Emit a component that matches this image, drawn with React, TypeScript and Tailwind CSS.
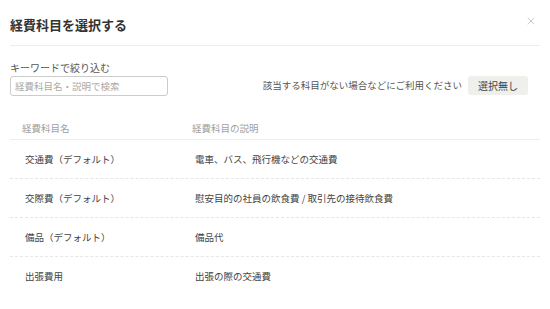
import { X } from "lucide-react";

interface ExpenseItem {
  name: string;
  description: string;
}

const items: ExpenseItem[] = [
  { name: "交通費（デフォルト）", description: "電車、バス、飛行機などの交通費" },
  { name: "交際費（デフォルト）", description: "慰安目的の社員の飲食費 / 取引先の接待飲食費" },
  { name: "備品（デフォルト）", description: "備品代" },
  { name: "出張費用", description: "出張の際の交通費" },
];

export default function App() {
  return (
    <div className="w-[550px] h-[309px] overflow-hidden bg-white px-[10px] font-['Noto_Sans_CJK_JP','Noto_Sans',sans-serif] text-[#333]">
      {/* ヘッダー */}
      <div className="flex justify-between items-start h-[46px] border-b border-[#eeeeee]">
        <h2 className="pt-[16px] leading-[18px] text-[13px] font-bold text-[#333]">
          経費科目を選択する
        </h2>
        <button className="mt-[15px] mr-[3px] text-[#b8b8b8]">
          <X size={12} strokeWidth={1.5} />
        </button>
      </div>

      {/* 絞り込み */}
      <div className="flex justify-between items-end mt-[16px]">
        <div>
          <label className="block text-[10px] leading-[12px] text-[#555] mb-[2px]">
            キーワードで絞り込む
          </label>
          <input
            className="block w-[158px] h-[20px] border border-[#cccccc] rounded-[3px] px-[4px] text-[9.5px] outline-none placeholder:text-[#aaaaaa]"
            placeholder="経費科目名・説明で検索"
          />
        </div>
        <div className="flex items-center gap-[6px] mr-[12px] mb-[1px]">
          <span className="text-[9.5px] text-[#555]">
            該当する科目がない場合などにご利用ください
          </span>
          <button className="w-[60px] h-[19px] rounded-[3px] bg-[#efefec] text-[10px] text-[#444]">
            選択無し
          </button>
        </div>
      </div>

      {/* テーブル */}
      <div className="mt-[21px]">
        <div className="grid grid-cols-[182px_1fr] items-center h-[23px] border-b border-[#eeeeee] text-[9.5px] text-[#a0a0a0]">
          <div className="pl-[12px]">経費科目名</div>
          <div>経費科目の説明</div>
        </div>
        {items.map((item, i) => (
          <div
            key={item.name}
            className={
              i < items.length - 1
                ? "grid grid-cols-[182px_1fr] items-center h-[39px] border-b border-dashed border-[#e6e6e6] text-[9.5px] text-[#444] cursor-pointer"
                : "grid grid-cols-[182px_1fr] items-center h-[39px] text-[9.5px] text-[#444] cursor-pointer"
            }
          >
            <div className="pl-[15px]">{item.name}</div>
            <div className="pl-[3px]">{item.description}</div>
          </div>
        ))}
      </div>
    </div>
  );
}
